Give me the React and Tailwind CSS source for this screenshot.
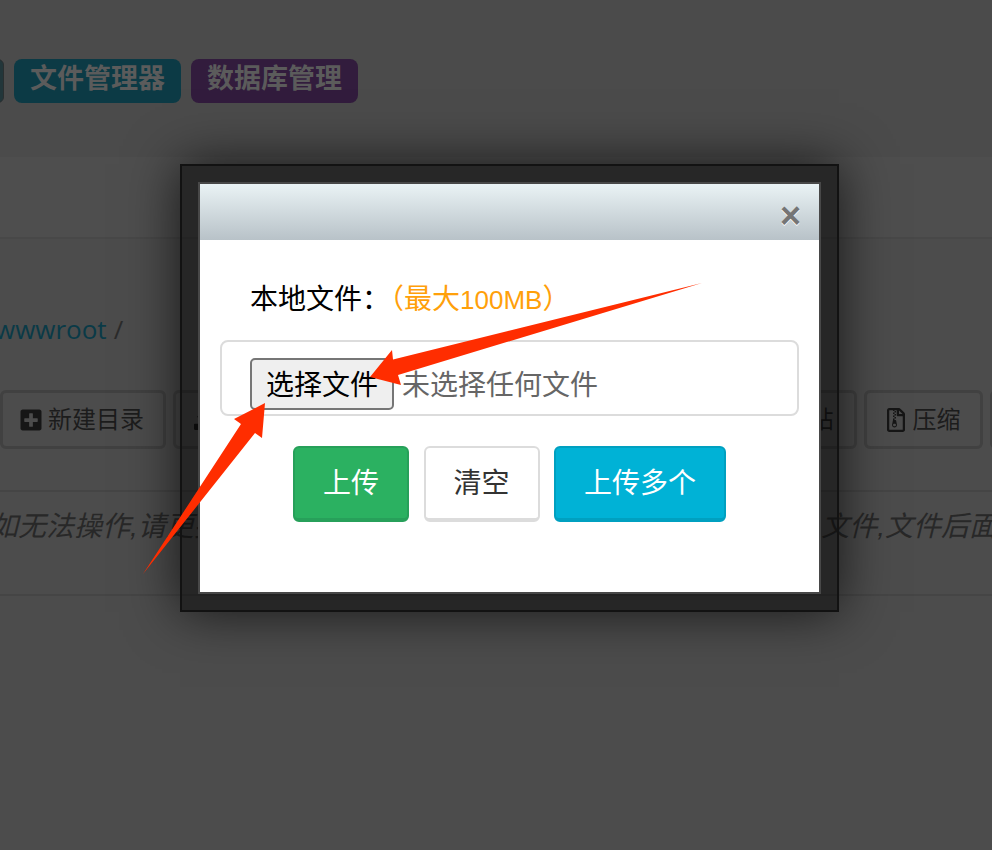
import React from 'react';
import { FaPlusSquare, FaRegFileArchive, FaUpload, FaCopy, FaPaste, FaCut, FaDownload } from 'react-icons/fa';

const ToolButton = ({ icon, label, width }) => (
  <div className={`flex h-[59px] shrink-0 items-center justify-center gap-[5px] rounded-[6px] border-[3px] border-[#414141] pr-[3px] text-[24px] text-[#1c1c1c] ${width}`}>
    {icon}
    <span>{label}</span>
  </div>
);

const App = () => {
  return (
    <div className="relative h-[850px] w-full overflow-hidden bg-[#4c4c4c] font-['Liberation_Sans','Noto_Sans_CJK_SC',sans-serif]">
      {/* dimmed page behind the dialog */}
      <div className="h-[157px] bg-[#4b4b4b] pt-[59px]">
        <div className="-ml-[163px] flex gap-[10px]">
          <div className="h-[44px] w-[167px] rounded-[6px] border border-[#2a2f30] bg-[#22363a]" />
          <div className="flex h-[44px] w-[167px] items-center justify-center rounded-[8px] bg-[#0c3a45] pb-[3px] text-[27px] font-bold text-[#5b5b5b]">文件管理器</div>
          <div className="flex h-[44px] w-[167px] items-center justify-center rounded-[8px] bg-[#321c3d] pb-[3px] text-[27px] font-bold text-[#5b5b5b]">数据库管理</div>
        </div>
      </div>
      <div className="h-[82px] border-b-2 border-[#484848] bg-[#4e4e4e]" />
      <div className="pt-[70px]">
        <div className="-ml-[5px] flex h-[40px] items-center gap-[7px] whitespace-nowrap font-['Open_Sans','Noto_Sans_CJK_SC',sans-serif] text-[26px]">
          <span className="text-[#0a3a47]">wwwroot</span>
          <span className="text-[#2b2b2b]">/</span>
        </div>
        <div className="mt-[41px] flex gap-[7px]">
          <ToolButton width="w-[166px]" label="新建目录" icon={<FaPlusSquare className="text-[24px] text-[#161616]" />} />
          <ToolButton width="w-[166px]" label="上传文件" icon={<FaUpload className="text-[20px] text-[#161616]" />} />
          <ToolButton width="w-[166px]" label="远程下载" icon={<FaDownload className="text-[20px] text-[#161616]" />} />
          <ToolButton width="w-[102px]" label="复制" icon={<FaCopy className="text-[20px]" />} />
          <ToolButton width="w-[103px]" label="剪切" icon={<FaCut className="text-[20px]" />} />
          <ToolButton width="w-[119px]" label="粘贴" icon={<FaPaste className="text-[22px]" />} />
          <ToolButton width="w-[119px]" label="压缩" icon={<FaRegFileArchive className="text-[24px] text-[#161616]" />} />
          <ToolButton width="w-[119px]" label="解压" icon={<FaRegFileArchive className="text-[24px]" />} />
        </div>
        <div className="mt-[41px] flex h-[106px] items-start justify-between overflow-hidden border-y-2 border-[#454545] pt-[15px] text-[28px] italic leading-[40px] text-[#282828]">
          <span className="-ml-[10px] whitespace-nowrap">如无法操作,请更换浏览器</span>
          <span className="-mr-[5px] whitespace-nowrap">文件,文件后面</span>
        </div>
      </div>

      {/* dialog */}
      <div className="absolute left-[180px] top-[164px] h-[448px] w-[659px] border-2 border-[#121212] bg-black/50 p-[16px] shadow-[0_0_50px_rgba(0,0,0,0.7)]">
        <div className="flex h-full flex-col border-2 border-[#484848] bg-white">
          <div className="flex h-[56px] shrink-0 items-center justify-end bg-gradient-to-b from-[#eaf3f5] to-[#b8c2c8] pr-[18px] pt-[8px]">
            <span className="text-[36px] font-bold leading-none text-[#757575] [text-shadow:0_1px_0_#fff]">×</span>
          </div>
          <div className="whitespace-nowrap pl-[50px] pt-[40px] text-[28px] leading-[40px] text-black">
            本地文件：<span className="text-[#ffa00a]">（最大<span className="text-[26px]">100MB</span>）</span>
          </div>
          <div className="mx-[20px] mt-[20px] flex h-[76px] items-center rounded-[8px] border-2 border-[#dcdcdc] pl-[28px] pt-[12px]">
            <div className="flex h-[52px] w-[144px] items-center justify-center rounded-[5px] border-2 border-[#767676] bg-[#efefef] pt-[3px] text-[28px] text-black">选择文件</div>
            <span className="ml-[8px] pt-[3px] text-[28px] text-[#666666]">未选择任何文件</span>
          </div>
          <div className="mt-[30px] flex justify-center gap-[14.5px] text-[28px]">
            <div className="flex h-[76px] w-[116px] items-center justify-center rounded-[6px] border-2 border-b-4 border-[#27a05a] bg-[#2bb161] pt-[1px] text-white">上传</div>
            <div className="flex h-[76px] w-[116px] items-center justify-center rounded-[6px] border-2 border-b-4 border-[#dcdcdc] bg-white pt-[1px] text-[#333333]">清空</div>
            <div className="flex h-[76px] w-[172px] items-center justify-center rounded-[6px] border-2 border-b-4 border-[#00a0c0] bg-[#00b2d6] pt-[1px] text-white">上传多个</div>
          </div>
        </div>
      </div>

      {/* red annotation arrows */}
      <svg className="pointer-events-none absolute left-0 top-0" width="992" height="850" viewBox="0 0 992 850">
        <polygon fill="#ff2d00" points="702,283 393,359.5 392,350 370,377 401,385 398,375" />
        <polygon fill="#ff2d00" points="143,574 241,424 234,419 265,403 262,438 255,433" />
      </svg>
    </div>
  );
};

export default App;
